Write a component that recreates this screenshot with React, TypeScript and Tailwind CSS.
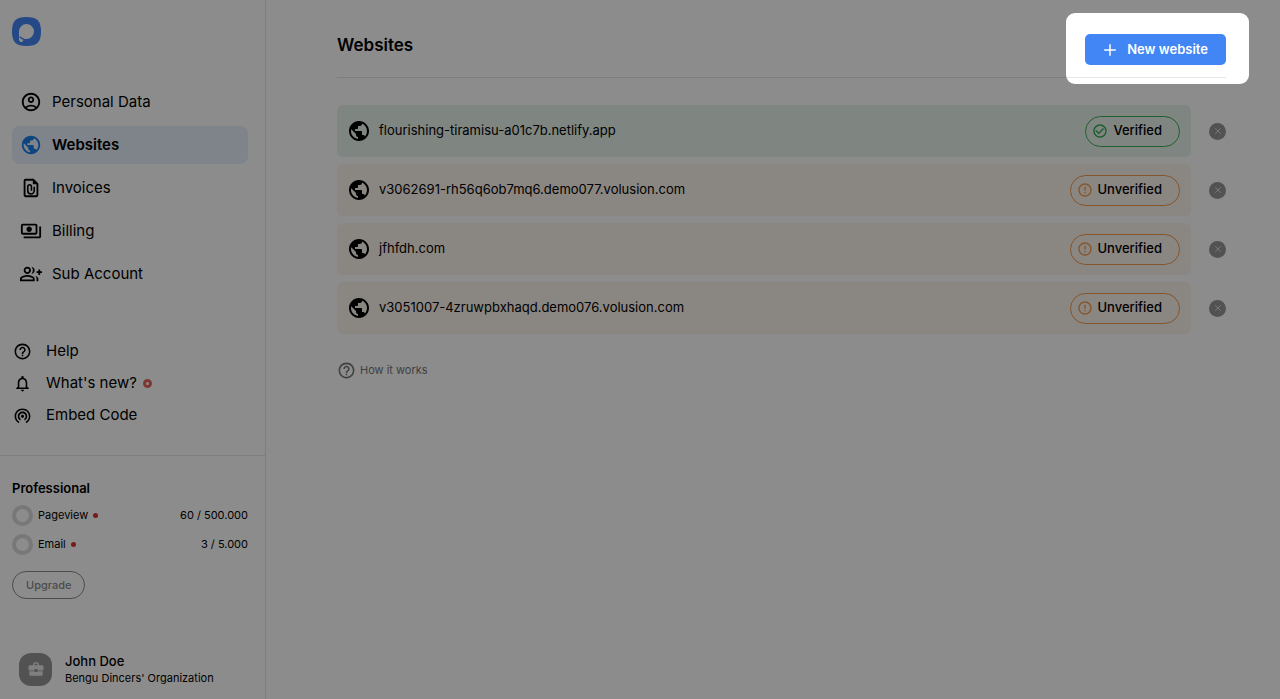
import React from 'react';
import {
  MdOutlineAccountCircle,
  MdPublic,
  MdOutlinePayments,
  MdOutlineGroupAdd,
  MdHelpOutline,
  MdNotificationsNone,
  MdWifiTethering,
  MdBusinessCenter,
  MdCheckCircleOutline,
  MdErrorOutline,
} from 'react-icons/md';
import { Plus, X } from 'lucide-react';

interface Website {
  domain: string;
  verified: boolean;
}

const websites: Website[] = [
  { domain: 'flourishing-tiramisu-a01c7b.netlify.app', verified: true },
  { domain: 'v3062691-rh56q6ob7mq6.demo077.volusion.com', verified: false },
  { domain: 'jfhfdh.com', verified: false },
  { domain: 'v3051007-4zruwpbxhaqd.demo076.volusion.com', verified: false },
];

function InvoiceIcon({ className }: { className?: string }) {
  return (
    <svg viewBox="0 0 24 24" fill="none" stroke="currentColor" strokeWidth="2" className={className}>
      <path d="M14.5 3H6a1 1 0 0 0-1 1v16a1 1 0 0 0 1 1h12a1 1 0 0 0 1-1V7.500Z" strokeLinejoin="round" />
      <path d="M14 2v6h6Z" fill="currentColor" stroke="none" />
      <path d="M15.500 10.500v4.500a3.500 3.500 0 0 1-7 0V10.500a2 2 0 0 1 4 0V15" strokeWidth="1.700" />
    </svg>
  );
}

function Logo() {
  return (
    <svg viewBox="0 0 29 29" className="w-[29px] h-[29px]">
      <path d="M14.500 0C25 0 29 4 29 14.500S25 29 14.500 29 0 25 0 14.500 4 0 14.500 0Z" fill="#4285f4" />
      <path
        d="M7 14.500a7.500 7.500 0 1 1 7.500 7.500c-1.300 0-2.300-.2-3-.6 0 2.200-.7 3.600-2.300 3.600C7.800 25 7 24 7 22.500Z"
        fill="#fff"
      />
      <path d="M7.800 19.600c1 1.600 2.400 2.400 4.200 2.600" fill="none" stroke="#4285f4" strokeWidth="1.400" />
    </svg>
  );
}

const mainNav = [
  { label: 'Personal Data', icon: MdOutlineAccountCircle, active: false },
  { label: 'Websites', icon: MdPublic, active: true },
  { label: 'Invoices', icon: InvoiceIcon, active: false },
  { label: 'Billing', icon: MdOutlinePayments, active: false },
  { label: 'Sub Account', icon: MdOutlineGroupAdd, active: false },
];

const helpNav = [
  { label: 'Help', icon: MdHelpOutline, isNew: false },
  { label: "What's new?", icon: MdNotificationsNone, isNew: true },
  { label: 'Embed Code', icon: MdWifiTethering, isNew: false },
];

const usage = [
  { label: 'Pageview', value: '60 / 500.000' },
  { label: 'Email', value: '3 / 5.000' },
];

function Sidebar() {
  return (
    <aside className="w-[266px] shrink-0 flex flex-col border-r border-[#e6e6e6]">
      <div className="pl-3 pt-[17px]">
        <a href="#" aria-label="Home" className="block w-[29px]">
          <Logo />
        </a>
      </div>

      <nav className="mt-[37px] pl-3 pr-[17px] flex flex-col gap-[5px]">
        {mainNav.map(({ label, icon: Icon, active }) => (
          <a
            key={label}
            href="#"
            className={`flex items-center gap-[10px] h-[38px] pl-2 rounded-lg text-[15px] ${
              active ? 'bg-[#e5f0f9] font-semibold' : ''
            }`}
          >
            <Icon className={`w-[22px] h-[22px] ${active ? 'text-[#1a7fe8]' : ''}`} />
            <span>{label}</span>
          </a>
        ))}
      </nav>

      <nav className="mt-[42px] pl-[13px] flex flex-col">
        {helpNav.map(({ label, icon: Icon, isNew }) => (
          <a key={label} href="#" className="flex items-center h-8 text-[15px]">
            <Icon className="w-[19px] h-[19px] mr-[14px]" />
            <span>{label}</span>
            {isNew && <span className="ml-[6px] w-[9px] h-[9px] rounded-full border-[3px] border-[#e5675f]"></span>}
          </a>
        ))}
      </nav>

      <section className="mt-6 pt-[22px] pl-3 pr-[17px] border-t border-[#e6e6e6]">
        <h2 className="text-[13px] leading-5 font-semibold">Professional</h2>
        <div className="mt-[3px]">
          {usage.map((item) => (
            <div key={item.label} className="flex items-center h-[29px] text-[11px]">
              <span className="w-[21px] h-[21px] rounded-full border-4 border-[#dadada]"></span>
              <span className="ml-[5px]">{item.label}</span>
              <span className="ml-[5px] w-[5px] h-[5px] rounded-full bg-[#e0322c]"></span>
              <span className="ml-auto">{item.value}</span>
            </div>
          ))}
        </div>
        <button className="mt-3 h-7 px-[13px] rounded-full border border-[#8a8a8a] text-[#8a8a8a] text-[11px] font-medium">
          Upgrade
        </button>
      </section>

      {/* Account */}
      <div className="mt-auto pl-[19px] pb-[13px] flex items-center gap-[13px]">
        <div className="w-[33px] h-[33px] rounded-xl bg-[#969696] text-[#e8e8e8] flex items-center justify-center">
          <MdBusinessCenter className="w-[18px] h-[18px]" />
        </div>
        <div>
          <div className="text-[13px] leading-[18px] font-medium">John Doe</div>
          <div className="text-[11px] leading-4">Bengu Dincers' Organization</div>
        </div>
      </div>
    </aside>
  );
}

function StatusBadge({ verified }: { verified: boolean }) {
  return (
    <span
      className={`flex items-center gap-[5px] h-[31px] pl-[6px] pr-[17px] rounded-full border text-[13px] font-medium ${
        verified ? 'border-[#3fae55]' : 'border-[#f59a4c]'
      }`}
    >
      {verified ? (
        <MdCheckCircleOutline className="w-4 h-4 text-[#2aa84a]" />
      ) : (
        <MdErrorOutline className="w-4 h-4 text-[#f59a4c]" />
      )}
      {verified ? 'Verified' : 'Unverified'}
    </span>
  );
}

function WebsiteRow({ domain, verified }: Website) {
  return (
    <li className="flex items-center">
      <div
        className={`flex-1 flex items-center h-[52px] pl-[10px] pr-[11px] rounded-md ${
          verified ? 'bg-[#e7f3ec]' : 'bg-[#fbf4ec]'
        }`}
      >
        <MdPublic className="w-6 h-6" />
        <span className="ml-2 mr-auto text-[13px]">{domain}</span>
        <StatusBadge verified={verified} />
      </div>
      <button
        aria-label={`Remove ${domain}`}
        className="ml-[18px] w-[17px] h-[17px] rounded-full bg-[#969696] text-[#e8e8e8] flex items-center justify-center"
      >
        <X className="w-[10px] h-[10px]" />
      </button>
    </li>
  );
}

export default function App() {
  return (
    <div className="min-h-screen flex overflow-hidden bg-white text-black font-['Inter',sans-serif]">
      <Sidebar />

      <main className="flex-1 pl-[71px] pr-[54px]">
        <header className="pt-[34px] pb-3 flex items-start justify-between border-b border-[#e6e6e6]">
          <h1 className="text-[17px] leading-[22px] font-semibold">Websites</h1>
          <div className="relative">
            <button className="flex items-center gap-2 h-[31px] pl-4 pr-[18px] rounded-[5px] bg-[#4285f4] text-white text-[13px] font-semibold">
              <Plus className="w-[18px] h-[18px]" />
              New website
            </button>
            {/* Tour spotlight, dims the rest of the page */}
            <div className="absolute z-50 -top-[21px] -bottom-[19px] -left-[19px] -right-[23px] rounded-[9px] pointer-events-none shadow-[0_0_0_9999px_rgba(0,0,0,0.45)]"></div>
          </div>
        </header>

        <ul className="mt-[27px] flex flex-col gap-[7px]">
          {websites.map((site) => (
            <WebsiteRow key={site.domain} {...site} />
          ))}
        </ul>

        <a href="#" className="mt-[27px] inline-flex items-center gap-1 text-[11px] text-[#757575]">
          <MdHelpOutline className="w-[19px] h-[19px]" />
          How it works
        </a>
      </main>
    </div>
  );
}
